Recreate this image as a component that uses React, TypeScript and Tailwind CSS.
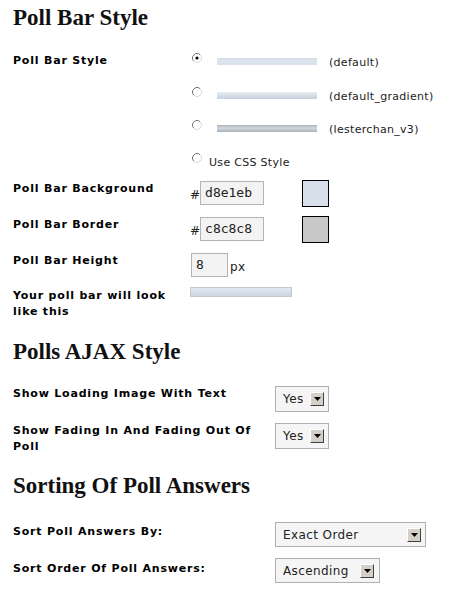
import React from "react";

const heading =
  "font-['Liberation_Serif',serif] text-[23px] font-bold leading-[23px] text-[#111]";
const label =
  "font-['DejaVu_Sans',sans-serif] text-[11px] font-bold leading-[16px] tracking-[0.8px] text-black";
const plain =
  "font-['DejaVu_Sans',sans-serif] text-[11px] leading-[16px] tracking-[0.3px] text-[#222]";
const field =
  "h-[24px] border border-[#b3b3b3] bg-[#f3f3f3] pl-[4px] font-['DejaVu_Sans_Mono',monospace] text-[13px] leading-[22px] text-[#222]";

function Radio({ checked = false }: { checked?: boolean }) {
  return (
    <svg width="10" height="10" viewBox="0 0 10 10" className="shrink-0">
      <circle cx="5" cy="5" r="4.5" fill="#fff" />
      <path d="M1.82 8.18 A4.5 4.5 0 0 1 8.18 1.82" fill="none" stroke="#6f6f6f" strokeWidth="1" />
      <path d="M8.18 1.82 A4.5 4.5 0 0 1 1.82 8.18" fill="none" stroke="#d8d8d8" strokeWidth="1" />
      {checked && <circle cx="5" cy="5" r="1.6" fill="#000" />}
    </svg>
  );
}

function Select({ value, width, right }: { value: string; width: string; right: string }) {
  return (
    <div
      className={`flex items-center justify-between border border-[#b0b0b0] bg-[#f5f5f5] pl-[7px] ${width} ${right}`}
    >
      <span className="font-['DejaVu_Sans',sans-serif] text-[12px] tracking-[0.4px] text-[#222]">
        {value}
      </span>
      <div className="flex h-[14px] w-[14px] items-center justify-center border border-t-white border-l-white border-r-[#404040] border-b-[#404040] bg-[#d4d0c8]">
        <svg width="7" height="4" viewBox="0 0 7 4">
          <path d="M0 0 H7 L3.5 4 Z" fill="#000" />
        </svg>
      </div>
    </div>
  );
}

const bars = [
  { name: "(default)", cls: "bg-[linear-gradient(#cfd8e2,#dde5ee_30%,#d8e1eb)]", checked: true },
  { name: "(default_gradient)", cls: "bg-[linear-gradient(#e8edf3,#d2dbe5_60%,#c6d0db)]", checked: false },
  { name: "(lesterchan_v3)", cls: "bg-[linear-gradient(#aab3bd,#d2d8de_45%,#a7b0ba)]", checked: false },
];

export default function App() {
  return (
    <div className="min-h-[595px] w-[476px] bg-white px-[13px]">
      <h2 className={`${heading} pt-[6px]`}>Poll Bar Style</h2>

      <div className="mt-[24px] flex">
        <div className={`${label} w-[177px] shrink-0`}>Poll Bar Style</div>
        <div className="flex flex-col">
          {bars.map((b, i) => (
            <div key={b.name} className={`flex items-start pl-[2px] ${i === 0 ? "h-[34px]" : "h-[33px]"}`}>
              <Radio checked={b.checked} />
              <div className={`ml-[15px] mt-[5px] h-[7px] w-[100px] ${b.cls}`} />
              <span className={`${plain} ml-[12px] mt-[2px]`}>{b.name}</span>
            </div>
          ))}
          <div className="flex h-[27px] items-start pl-[2px]">
            <Radio />
            <span className={`${plain} ml-[7px] mt-[2px]`}>Use CSS Style</span>
          </div>
        </div>
      </div>

      {[
        { name: "Poll Bar Background", value: "d8e1eb", swatch: "bg-[#d8e1eb]" },
        { name: "Poll Bar Border", value: "c8c8c8", swatch: "bg-[#c8c8c8]" },
      ].map((r) => (
        <div key={r.name} className="flex h-[36px] items-start">
          <div className={`${label} w-[177px] shrink-0 pt-[1px]`}>{r.name}</div>
          <div className="mt-[1px] flex items-end">
            <span className="font-['DejaVu_Sans',sans-serif] text-[12px] leading-[20px] text-[#222]">#</span>
            <div className={`${field} w-[64px]`}>{r.value}</div>
          </div>
          <div className={`ml-[38px] h-[27px] w-[27px] border border-black ${r.swatch}`} />
        </div>
      ))}

      <div className="flex h-[35px] items-start">
        <div className={`${label} w-[177px] shrink-0 pt-[1px]`}>Poll Bar Height</div>
        <div className="ml-[1px] mt-[1px] flex items-end">
          <div className={`${field} w-[37px]`}>8</div>
          <span className={`${plain} ml-[2px] text-[12px] leading-[20px]`}>px</span>
        </div>
      </div>

      <div className="flex items-start">
        <div className={`${label} w-[177px] shrink-0 pt-[1px]`}>Your poll bar will look like this</div>
        <div className="h-[10px] w-[102px] border border-[#c8c8c8] bg-[linear-gradient(#e2e9f0,#d8e1eb_50%,#cdd7e2)]" />
      </div>

      <h2 className={`${heading} mt-[20px]`}>Polls AJAX Style</h2>

      <div className="mt-[23px] flex h-[37px] items-start">
        <div className={`${label} w-[262px] shrink-0`}>Show Loading Image With Text</div>
        <Select value="Yes" width="w-[54px] h-[26px]" right="pr-[4px]" />
      </div>
      <div className="flex items-start">
        <div className={`${label} w-[262px] shrink-0`}>Show Fading In And Fading Out Of Poll</div>
        <Select value="Yes" width="w-[54px] h-[26px]" right="pr-[4px]" />
      </div>

      <h2 className={`${heading} mt-[19px]`}>Sorting Of Poll Answers</h2>

      <div className="mt-[25px] flex h-[36px] items-start">
        <div className={`${label} w-[262px] shrink-0 pt-[2px]`}>Sort Poll Answers By:</div>
        <Select value="Exact Order" width="w-[151px] h-[25px]" right="pr-[4px]" />
      </div>
      <div className="flex items-start">
        <div className={`${label} w-[262px] shrink-0 pt-[3px]`}>Sort Order Of Poll Answers:</div>
        <Select value="Ascending" width="w-[105px] h-[25px]" right="pr-[5px]" />
      </div>
    </div>
  );
}
